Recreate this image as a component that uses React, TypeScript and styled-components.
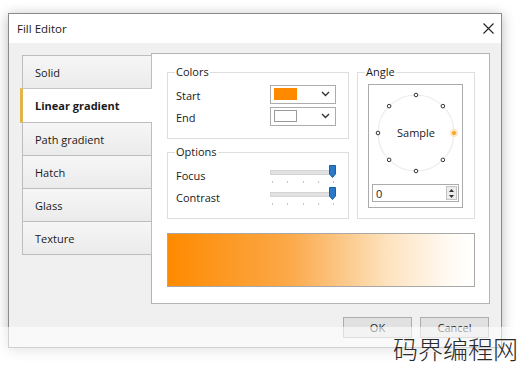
import React from 'react';
import styled, { createGlobalStyle } from 'styled-components';

const GlobalStyle = createGlobalStyle`
  html, body {
    margin: 0;
    padding: 0;
    background: #ffffff;
  }
  body {
    font-family: "Open Sans", "Noto Sans", sans-serif;
    color: #1a1a1a;
  }
`;

const Page = styled.div`
  position: relative;
  width: 519px;
  height: 367px;
  padding: 13px 0 0 8px;
  box-sizing: border-box;
  overflow: hidden;
`;

const Window = styled.div`
  width: 494px;
  height: 335px;
  box-sizing: border-box;
  border: 1px solid #8a8a8a;
  background: #f0f0f0;
  box-shadow: 0 2px 12px rgba(0, 0, 0, 0.28);
  display: flex;
  flex-direction: column;
`;

const TitleBar = styled.div`
  height: 29px;
  flex: none;
  background: #ffffff;
  display: flex;
  align-items: center;
  justify-content: space-between;
  padding: 0 6px 0 8px;
  font-size: 11.5px;
`;

const CloseButton = styled.div`
  width: 14px;
  height: 14px;
  display: flex;
  align-items: center;
  justify-content: center;
  color: #222;
`;

const Body = styled.div`
  flex: 1;
  display: flex;
  flex-direction: column;
  padding: 10px 10px 0 12px;
`;

const Main = styled.div`
  display: flex;
  align-items: flex-start;
`;

const TabList = styled.div`
  width: 131px;
  margin-top: 2px;
  margin-right: -1px;
  display: flex;
  flex-direction: column;
  position: relative;
  z-index: 1;
`;

const Tab = styled.div<{ $active?: boolean }>`
  height: 34px;
  box-sizing: border-box;
  display: flex;
  align-items: center;
  font-size: 11px;
  margin-top: -1px;
  ${({ $active }) =>
    $active
      ? `
    background: #ffffff;
    border-top: 1px solid #c4c4c4;
    border-bottom: 1px solid #c4c4c4;
    border-left: 3px solid #e3b548;
    margin-left: -1px;
    padding-left: 12px;
    font-weight: 700;
    height: 35px;
  `
      : `
    background: linear-gradient(#f6f6f6, #ebebeb);
    border: 1px solid #bdbdbd;
    margin-left: 1px;
    padding-left: 12px;
  `}
  &:first-child {
    margin-top: 0;
  }
`;

const Panel = styled.div`
  width: 339px;
  height: 251px;
  box-sizing: border-box;
  background: #ffffff;
  border: 1px solid #b4b4b4;
  padding: 11px 0 0 15px;
  display: grid;
  grid-template-columns: 182px 118px;
  grid-template-rows: 74px 74px 54px;
  column-gap: 8px;
  row-gap: 6px;
`;

const Group = styled.fieldset<{ $rows?: number }>`
  margin: 0;
  padding: 0 12px 0 8px;
  border: 1px solid #dedede;
  min-width: 0;
  grid-row: span ${({ $rows }) => $rows || 1};
  display: flex;
  flex-direction: column;
`;

const Legend = styled.legend`
  font-size: 11px;
  line-height: 14px;
  padding: 0 1px;
  margin-left: -1px;
`;

const FieldRow = styled.div`
  height: 22px;
  display: flex;
  align-items: center;
  justify-content: space-between;
  font-size: 11px;
  legend + & {
    margin-top: 5px;
  }
`;

const Combo = styled.div`
  width: 66px;
  height: 19px;
  box-sizing: border-box;
  border: 1px solid #acacac;
  background: #ffffff;
  display: flex;
  align-items: center;
  justify-content: space-between;
  padding: 0 5px 0 3px;
  margin-top: -2px;
`;

const Swatch = styled.div<{ $color: string }>`
  width: 23px;
  height: 12px;
  box-sizing: border-box;
  background: ${({ $color }) => $color};
  border: 1px solid ${({ $color }) => ($color === '#ffffff' ? '#9a9a9a' : $color)};
`;

const SliderBox = styled.div`
  width: 66px;
  height: 22px;
  position: relative;
  margin-top: 6px;
`;

const Track = styled.div`
  position: absolute;
  left: 0;
  right: 3px;
  top: 3px;
  height: 3px;
  background: #e2e2e2;
  border: 1px solid #d4d4d4;
`;

const Thumb = styled.svg`
  position: absolute;
  right: 0;
  top: -2px;
`;

const Ticks = styled.div`
  position: absolute;
  left: 2px;
  right: 2px;
  top: 14px;
  display: flex;
  justify-content: space-between;
`;

const Tick = styled.span`
  width: 1px;
  height: 2px;
  background: #c4c4c4;
`;

const AngleBox = styled.div`
  margin: 5px -1px 0 2px;
  height: 124px;
  box-sizing: border-box;
  border: 1px solid #ababab;
  background: #ffffff;
  display: flex;
  flex-direction: column;
  align-items: center;
`;

const Spin = styled.div`
  width: 87px;
  height: 18px;
  box-sizing: border-box;
  margin-top: 3px;
  border: 1px solid #acacac;
  display: flex;
  align-items: center;
  justify-content: space-between;
  padding: 0 1px 0 3px;
  font-size: 11px;
`;

const SpinButtons = styled.div`
  width: 11px;
  height: 14px;
  box-sizing: border-box;
  border: 1px solid #c2c2c2;
  background: #ececec;
  display: flex;
  flex-direction: column;
  align-items: center;
  justify-content: space-around;
`;

const Preview = styled.div`
  grid-column: span 2;
  margin-top: 8px;
  height: 54px;
  box-sizing: border-box;
  border: 1px solid #a9a9a9;
  background: linear-gradient(to right, #ff8a00 0%, #fba94a 40%, #fde3bf 72%, #fffaf3 92%, #ffffff 100%);
`;

const Footer = styled.div`
  display: flex;
  justify-content: flex-end;
  gap: 8px;
  padding-top: 13px;
  padding-right: 2px;
`;

const Button = styled.div`
  width: 69px;
  height: 21px;
  box-sizing: border-box;
  border: 1px solid #adadad;
  background: #e1e1e1;
  display: flex;
  align-items: center;
  justify-content: center;
  font-size: 11px;
`;

const WatermarkBand = styled.div`
  position: absolute;
  left: 0;
  right: 0;
  top: 327px;
  height: 40px;
  background: rgba(255, 255, 255, 0.6);
  display: flex;
  justify-content: flex-end;
  align-items: flex-start;
`;

const Watermark = styled.div`
  font-family: "Noto Sans CJK SC", sans-serif;
  font-weight: 300;
  font-size: 25px;
  line-height: 30px;
  color: #2a2a2a;
  padding-top: 6px;
  margin-right: 1px;
`;

const tabs = ['Solid', 'Linear gradient', 'Path gradient', 'Hatch', 'Glass', 'Texture'];

const Chevron = () => (
  <svg width="9" height="6" viewBox="0 0 9 6">
    <path d="M1 1 L4.5 4.5 L8 1" fill="none" stroke="#333" strokeWidth="1.4" />
  </svg>
);

const Slider = () => (
  <SliderBox>
    <Track />
    <Thumb width="7" height="13" viewBox="0 0 7 13">
      <path d="M0.5 0.5 H6.5 V9 L3.5 12.5 L0.5 9 Z" fill="#2b78c6" stroke="#1a5ea6" />
    </Thumb>
    <Ticks>
      {[0, 1, 2, 3, 4].map((i) => (
        <Tick key={i} />
      ))}
    </Ticks>
  </SliderBox>
);

const Dial = () => {
  const cx = 47;
  const cy = 48;
  const r = 38;
  const dots = [0, 45, 90, 135, 180, 225, 270, 315].map((a) => {
    const rad = (a * Math.PI) / 180;
    return { a, x: cx + r * Math.cos(rad), y: cy - r * Math.sin(rad) };
  });
  return (
    <svg width="93" height="96" viewBox="0 0 93 96">
      <circle cx={cx} cy={cy} r={r} fill="none" stroke="#ececec" strokeWidth="1.2" />
      {dots.map((d) =>
        d.a === 0 ? (
          <g key={d.a}>
            <circle cx={d.x} cy={d.y} r="4" fill="#fde6c4" />
            <circle cx={d.x} cy={d.y} r="2" fill="#f5a623" />
          </g>
        ) : (
          <circle key={d.a} cx={d.x} cy={d.y} r="1.8" fill="#fff" stroke="#333" strokeWidth="1" />
        )
      )}
      <text x={cx} y={cy + 4} textAnchor="middle" fontSize="11" fontFamily="Open Sans, sans-serif" fill="#1a1a1a">
        Sample
      </text>
    </svg>
  );
};

const App: React.FC = () => {
  return (
    <Page>
      <GlobalStyle />
      <Window>
        <TitleBar>
          <span>Fill Editor</span>
          <CloseButton>
            <svg width="11" height="11" viewBox="0 0 11 11">
              <path d="M0.5 0.5 L10.5 10.5 M10.5 0.5 L0.5 10.5" stroke="#222" strokeWidth="1.1" />
            </svg>
          </CloseButton>
        </TitleBar>
        <Body>
          <Main>
            <TabList>
              {tabs.map((t) => (
                <Tab key={t} $active={t === 'Linear gradient'}>
                  {t}
                </Tab>
              ))}
            </TabList>
            <Panel>
              <Group>
                <Legend>Colors</Legend>
                <FieldRow>
                  Start
                  <Combo>
                    <Swatch $color="#ff8a00" />
                    <Chevron />
                  </Combo>
                </FieldRow>
                <FieldRow>
                  End
                  <Combo>
                    <Swatch $color="#ffffff" />
                    <Chevron />
                  </Combo>
                </FieldRow>
              </Group>
              <Group $rows={2}>
                <Legend>Angle</Legend>
                <AngleBox>
                  <Dial />
                  <Spin>
                    0
                    <SpinButtons>
                      <svg width="5" height="3" viewBox="0 0 5 3">
                        <path d="M0 3 L2.5 0 L5 3 Z" fill="#333" />
                      </svg>
                      <svg width="5" height="3" viewBox="0 0 5 3">
                        <path d="M0 0 L2.5 3 L5 0 Z" fill="#333" />
                      </svg>
                    </SpinButtons>
                  </Spin>
                </AngleBox>
              </Group>
              <Group>
                <Legend>Options</Legend>
                <FieldRow>
                  Focus
                  <Slider />
                </FieldRow>
                <FieldRow>
                  Contrast
                  <Slider />
                </FieldRow>
              </Group>
              <Preview />
            </Panel>
          </Main>
          <Footer>
            <Button>OK</Button>
            <Button>Cancel</Button>
          </Footer>
        </Body>
      </Window>
      <WatermarkBand>
        <Watermark>码界编程网</Watermark>
      </WatermarkBand>
    </Page>
  );
};

export default App;
